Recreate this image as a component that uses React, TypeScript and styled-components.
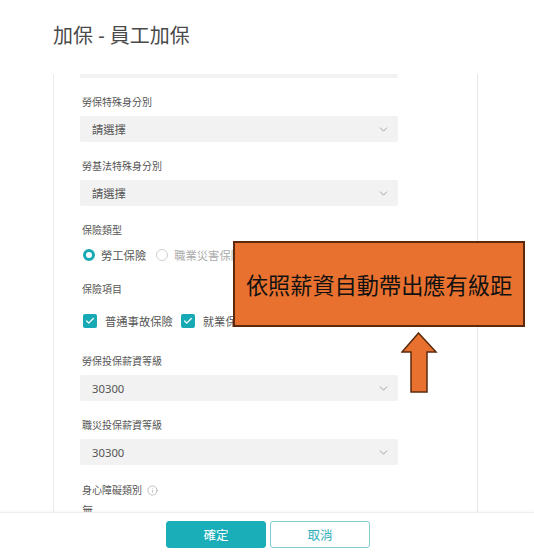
import React from "react";
import styled, { createGlobalStyle } from "styled-components";
import { ChevronDown, Info, Check } from "lucide-react";

const Global = createGlobalStyle`
  html, body { margin: 0; padding: 0; background: #fff; }
  body { font-family: "Noto Sans", "Noto Sans CJK TC", sans-serif; }
  * { box-sizing: border-box; }
`;

const Page = styled.div`
  position: relative;
  width: 534px;
  height: 552px;
  display: flex;
  flex-direction: column;
  overflow: hidden;
  background: #fff;
`;

const Header = styled.div`
  height: 74px;
  flex: none;
  display: flex;
  align-items: center;
  padding: 0 0 0 53px;
`;

const Title = styled.h1`
  margin: 0 0 2px;
  font-size: 20px;
  font-weight: 400;
  color: #4a4a4a;
  line-height: 28px;
`;

const Body = styled.div`
  flex: 1;
  min-height: 0;
  display: flex;
`;

const Panel = styled.div`
  margin-left: 53px;
  width: 425px;
  height: 100%;
  border-left: 1px solid #ececec;
  border-right: 1px solid #e6e6e6;
  overflow: hidden;
`;

const Scroll = styled.div`
  margin-top: -22px;
  padding-left: 26px;
  display: flex;
  flex-direction: column;
`;

const Field = styled.div<{ $mb?: number }>`
  display: flex;
  flex-direction: column;
  margin-bottom: ${(p) => (p.$mb ?? 17)}px;
`;

const Label = styled.div`
  font-size: 10px;
  line-height: 14px;
  color: #555;
  padding-left: 2px;
  margin-bottom: 7px;
  display: flex;
  align-items: center;
  gap: 5px;
`;

const SelectBox = styled.div`
  width: 318px;
  height: 26px;
  background: #f2f2f2;
  border-radius: 2px;
  display: flex;
  align-items: center;
  justify-content: space-between;
  padding: 0 8px 0 12px;
  font-size: 11.3px;
  color: #555;
`;

const Row = styled.div<{ $mt?: number }>`
  height: 22px;
  margin-top: ${(p) => (p.$mt ?? 0)}px;
  display: flex;
  align-items: center;
  padding-left: 3px;
  font-size: 11.3px;
`;

const Radio = styled.span<{ $on?: boolean }>`
  width: 12px;
  height: 12px;
  border-radius: 50%;
  flex: none;
  border: ${(p) => (p.$on ? "3.5px solid #17a9b4" : "1px solid #cfcfcf")};
  background: #fff;
  margin-right: 6px;
`;

const OptText = styled.span<{ $dim?: boolean; $gap?: number }>`
  color: ${(p) => (p.$dim ? "#aaa" : "#555")};
  margin-right: ${(p) => (p.$gap ?? 0)}px;
  white-space: nowrap;
`;

const CheckBox = styled.span`
  width: 14px;
  height: 14px;
  border-radius: 2px;
  background: #17a9b4;
  flex: none;
  display: flex;
  align-items: center;
  justify-content: center;
  margin-right: 8px;
  color: #fff;
`;

const PlainValue = styled.div`
  font-size: 11.3px;
  color: #555;
  padding-left: 2px;
  line-height: 14px;
`;

const Footer = styled.div`
  height: 40px;
  flex: none;
  border-top: 1px solid #eeeeee;
  box-shadow: 0 -1px 3px rgba(0, 0, 0, 0.04);
  display: flex;
  justify-content: center;
  align-items: flex-start;
  padding-top: 8px;
  gap: 4px;
  background: #fff;
  padding-left: 2px;
`;

const Button = styled.button<{ $primary?: boolean }>`
  width: 100px;
  height: 27px;
  border-radius: 3px;
  font-family: "Noto Sans CJK TC", sans-serif;
  font-size: 12.5px;
  cursor: pointer;
  border: 1px solid ${(p) => (p.$primary ? "#1aafb8" : "#7dcdd3")};
  background: ${(p) => (p.$primary ? "#1aafb8" : "#fff")};
  color: ${(p) => (p.$primary ? "#fff" : "#2fb0b9")};
`;

const Callout = styled.div`
  position: absolute;
  left: 233px;
  top: 241px;
  width: 292px;
  height: 86px;
  background: #e9712f;
  border: 2px solid #5b2a0c;
  display: flex;
  align-items: center;
  justify-content: center;
  font-family: "Noto Sans CJK TC", sans-serif;
  font-size: 22.2px;
  color: #111;
  padding-bottom: 1px;
`;

const ArrowWrap = styled.svg`
  position: absolute;
  left: 401px;
  top: 332px;
`;

const Select = ({ value }: { value: string }) => (
  <SelectBox>
    <span>{value}</span>
    <ChevronDown size={13} strokeWidth={1.4} color="#8a8a8a" />
  </SelectBox>
);

export default function App() {
  return (
    <>
      <Global />
      <Page>
        <Header>
          <Title>加保 - 員工加保</Title>
        </Header>
        <Body>
          <Panel>
            <Scroll>
              <Field>
                <Select value="" />
              </Field>
              <Field>
                <Label>勞保特殊身分別</Label>
                <Select value="請選擇" />
              </Field>
              <Field>
                <Label>勞基法特殊身分別</Label>
                <Select value="請選擇" />
              </Field>
              <Field $mb={16}>
                <Label>保險類型</Label>
                <Row>
                  <Radio $on />
                  <OptText $gap={10}>勞工保險</OptText>
                  <Radio />
                  <OptText $dim>職業災害保險</OptText>
                </Row>
              </Field>
              <Field $mb={22}>
                <Label>保險項目</Label>
                <Row $mt={7}>
                  <CheckBox>
                    <Check size={10} strokeWidth={3} />
                  </CheckBox>
                  <OptText $gap={8}>普通事故保險</OptText>
                  <CheckBox>
                    <Check size={10} strokeWidth={3} />
                  </CheckBox>
                  <OptText>就業保險</OptText>
                </Row>
              </Field>
              <Field>
                <Label>勞保投保薪資等級</Label>
                <Select value="30300" />
              </Field>
              <Field $mb={18}>
                <Label>職災投保薪資等級</Label>
                <Select value="30300" />
              </Field>
              <Field>
                <Label>
                  身心障礙類別
                  <Info size={11} strokeWidth={1.3} color="#999" />
                </Label>
                <PlainValue>無</PlainValue>
              </Field>
            </Scroll>
          </Panel>
        </Body>
        <Footer>
          <Button $primary>確定</Button>
          <Button>取消</Button>
        </Footer>
        <Callout>依照薪資自動帶出應有級距</Callout>
        <ArrowWrap width="37" height="62" viewBox="0 0 37 62">
          <path
            d="M17.5 1 L1 20 L10 20 L10 60 L26 60 L26 20 L35 20 Z"
            fill="#e9712f"
            stroke="#5b2a0c"
            strokeWidth="1.5"
            strokeLinejoin="miter"
          />
        </ArrowWrap>
      </Page>
    </>
  );
}
